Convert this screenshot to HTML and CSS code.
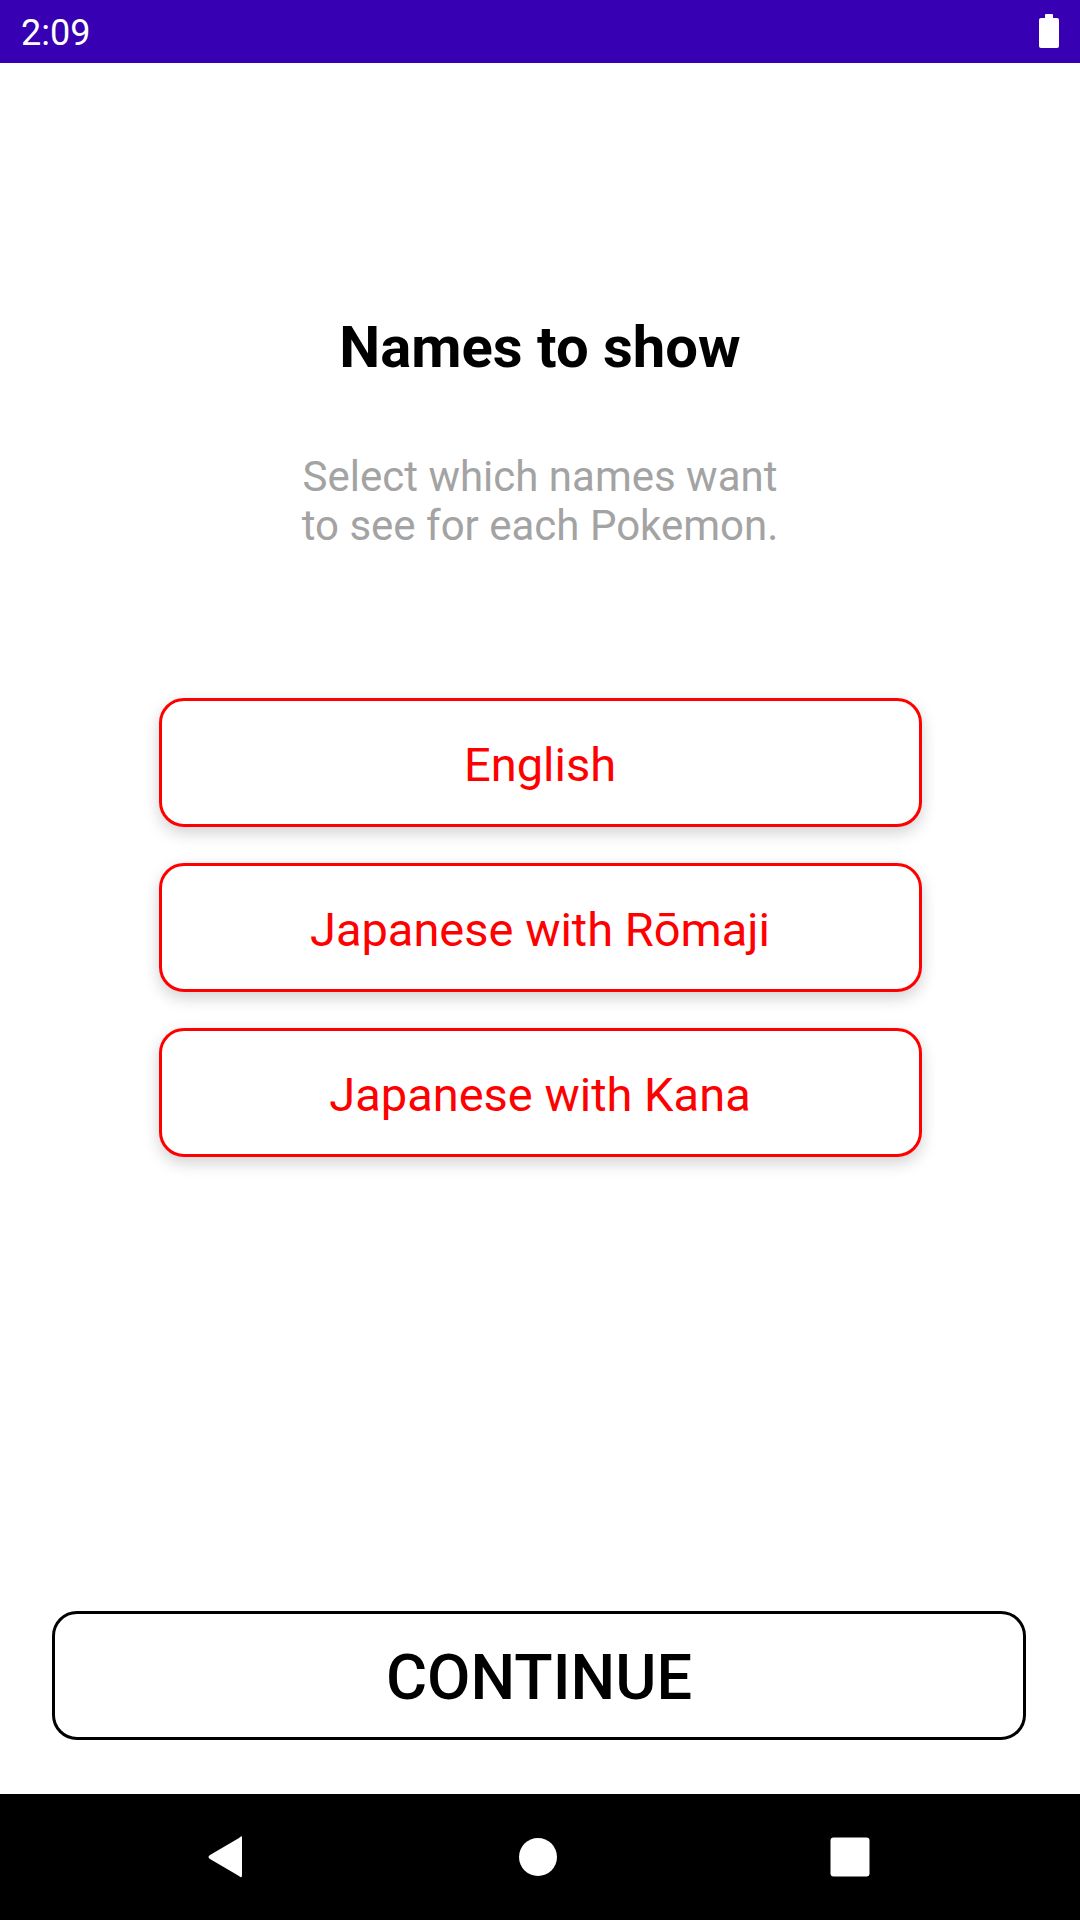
FILE: index.html
```html
<!DOCTYPE html>
<html>
<head>
<meta charset="utf-8">
<link rel="stylesheet" href="styles.css">
</head>
<body>
<div class="screen">
  <div class="statusbar">
    <span class="time">2:09</span>
    <svg class="battery" width="20" height="36" viewBox="0 0 20 36">
      <rect x="6" y="0" width="8" height="5" rx="1" fill="#fff"/>
      <rect x="0" y="4" width="20" height="30" rx="2" fill="#fff"/>
    </svg>
  </div>
  <div class="main">
    <h1 class="title">Names to show</h1>
    <p class="subtitle">Select which names want<br>to see for each Pokemon.</p>
    <div class="options">
      <div class="option">English</div>
      <div class="option">Japanese with Rōmaji</div>
      <div class="option">Japanese with Kana</div>
    </div>
    <div class="spacer"></div>
    <div class="continue">CONTINUE</div>
  </div>
  <div class="navbar">
    <svg class="nav-icon" width="40" height="44" viewBox="0 0 40 44">
      <path d="M36 2 L36 40 Q36 44 33 41 L4 24 Q1 22 4 20 L33 3 Q36 0 36 2 Z" fill="#fff"/>
    </svg>
    <svg class="nav-icon" width="40" height="40" viewBox="0 0 40 40">
      <circle cx="20" cy="20" r="19" fill="#fff"/>
    </svg>
    <svg class="nav-icon" width="40" height="40" viewBox="0 0 40 40">
      <rect x="0.5" y="0.5" width="39" height="39" rx="3" fill="#fff"/>
    </svg>
  </div>
</div>
</body>
</html>
```

FILE: styles.css
```css
html, body {
  margin: 0;
  padding: 0;
  background: #fff;
}

.screen {
  width: 1080px;
  height: 1920px;
  display: flex;
  flex-direction: column;
  font-family: Roboto, "Noto Sans", "Liberation Sans", sans-serif;
}

.statusbar {
  height: 63px;
  flex: none;
  background: #3700b3;
  display: flex;
  align-items: center;
  justify-content: space-between;
  padding: 0 21px 0 21px;
  box-sizing: border-box;
}

.time {
  color: #fff;
  font-size: 36px;
  line-height: 1;
  margin-top: 2px;
}

.battery {
  display: block;
}

.main {
  flex: 1;
  display: flex;
  flex-direction: column;
  align-items: center;
}

.title {
  margin: 250px 0 0 0;
  font-size: 58px;
  font-weight: 700;
  line-height: 68px;
  color: #000;
  text-align: center;
}

.subtitle {
  margin: 71px 0 0 0;
  font-size: 42px;
  line-height: 49px;
  color: #a3a3a3;
  text-align: center;
}

.options {
  margin-top: 148px;
  display: flex;
  flex-direction: column;
  gap: 36px;
}

.option {
  width: 763px;
  height: 129px;
  box-sizing: border-box;
  padding-top: 4px;
  border: 3px solid #ff0000;
  border-radius: 25px;
  background: #fff;
  box-shadow: 0 6px 16px rgba(0, 0, 0, 0.18);
  color: #ff0000;
  font-size: 47px;
  display: flex;
  align-items: center;
  justify-content: center;
}

.spacer {
  flex: 1;
}

.continue {
  align-self: stretch;
  margin: 0 54px 54px 52px;
  height: 129px;
  box-sizing: border-box;
  padding-top: 4px;
  border: 3px solid #000;
  border-radius: 25px;
  color: #000;
  font-size: 63px;
  font-weight: 500;
  display: flex;
  align-items: center;
  justify-content: center;
}

.navbar {
  height: 126px;
  flex: none;
  background: #000;
  display: flex;
  align-items: center;
  justify-content: space-between;
  padding: 0 210px 0 206px;
  box-sizing: border-box;
}

.nav-icon {
  display: block;
}
```
